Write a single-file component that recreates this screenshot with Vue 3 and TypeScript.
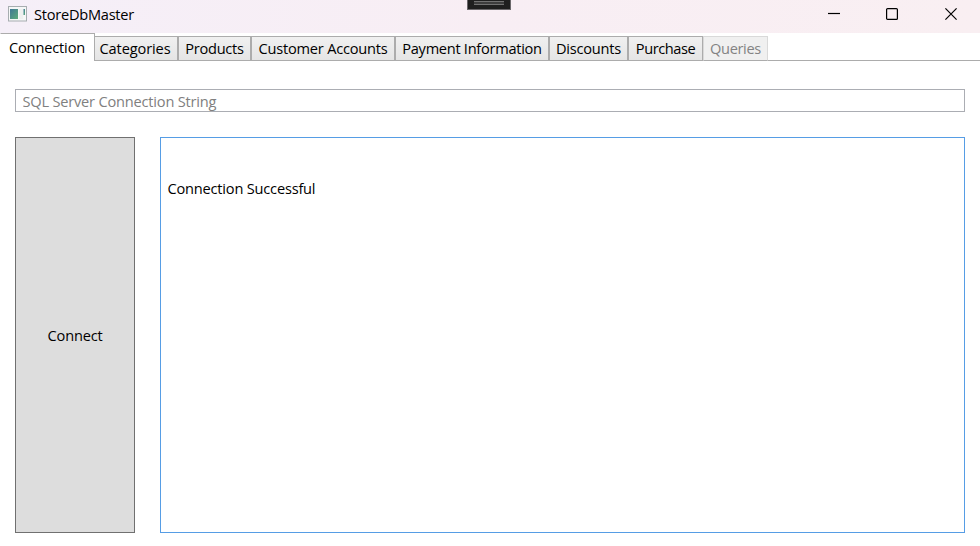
<script setup lang="ts">
import { ref } from 'vue'

interface Tab {
  label: string
  width: number
  spacing: number
  disabled?: boolean
}

const tabs: Tab[] = [
  { label: 'Connection', width: 95, spacing: -0.15 },
  { label: 'Categories', width: 84, spacing: -0.12 },
  { label: 'Products', width: 73, spacing: -0.25 },
  { label: 'Customer Accounts', width: 144, spacing: -0.2 },
  { label: 'Payment Information', width: 154, spacing: -0.28 },
  { label: 'Discounts', width: 79, spacing: -0.22 },
  { label: 'Purchase', width: 75, spacing: -0.45 },
  { label: 'Queries', width: 65, spacing: -0.35, disabled: true },
]
const active = ref('Connection')
const connectionString = ref('')
const message = ref('Connection Successful')
</script>

<template>
  <div class="window">
    <header class="titlebar">
      <svg class="app-icon" width="19" height="16" viewBox="0 0 19 16">
        <defs>
          <linearGradient id="pane" x1="0" y1="0" x2="1" y2="1">
            <stop offset="0" stop-color="#3f7795" />
            <stop offset="1" stop-color="#5dac7b" />
          </linearGradient>
        </defs>
        <rect x="0.5" y="0.5" width="18" height="14.5" fill="#f5f7f7" stroke="#a7adb0" />
        <rect x="2" y="3" width="8" height="10" fill="url(#pane)" />
        <rect x="11" y="3" width="4" height="10" fill="#eef0ef" />
        <rect x="15.5" y="3" width="1.5" height="6" fill="url(#pane)" />
      </svg>
      <span class="title">StoreDbMaster</span>
      <div class="handle"><i></i></div>
      <div class="controls">
        <svg width="12" height="12" viewBox="0 0 12 12"><path d="M0 5.5H12" /></svg>
        <svg width="12" height="12" viewBox="0 0 12 12"><rect x="0.6" y="0.6" width="10.8" height="10.8" rx="1" /></svg>
        <svg width="12" height="12" viewBox="0 0 12 12"><path d="M0.4 0.4L11.6 11.6M11.6 0.4L0.4 11.6" /></svg>
      </div>
    </header>

    <nav class="tabs">
      <button
        v-for="tab in tabs"
        :key="tab.label"
        class="tab"
        :class="{ active: tab.label === active }"
        :disabled="tab.disabled"
        :style="{ width: tab.width + 'px', letterSpacing: tab.spacing + 'px' }"
        @click="active = tab.label"
      >{{ tab.label }}</button>
    </nav>

    <main class="page">
      <input v-model="connectionString" class="conn" placeholder="SQL Server Connection String" />
      <div class="row">
        <button class="connect">Connect</button>
        <div class="output">{{ message }}</div>
      </div>
    </main>
  </div>
</template>

<style>
body {
  background: #fff;
}
</style>

<style scoped>
.window {
  width: 980px;
  height: 546px;
  box-sizing: border-box;
  display: flex;
  flex-direction: column;
  overflow: hidden;
  background: #fff;
  color: #000;
  font: 14.6px/20px 'Open Sans', 'Noto Sans', sans-serif;
  letter-spacing: -0.2px;
}
.window button,
.window input {
  box-sizing: border-box;
  margin: 0;
  font: inherit;
  border-radius: 0;
}
.titlebar {
  position: relative;
  flex: none;
  display: flex;
  align-items: flex-start;
  height: 33px;
  padding-left: 8px;
  background: linear-gradient(90deg, #f5eff8 0%, #f8eef4 50%, #f9eff2 100%);
}
.app-icon {
  margin-top: 6px;
}
.title {
  margin: 4px 0 0 7px;
  letter-spacing: -0.25px;
}
.handle {
  position: absolute;
  left: 467px;
  top: 0;
  width: 44px;
  height: 10px;
  box-sizing: border-box;
  border: 1px solid #6b686b;
  border-top: 0;
  background: #1f1f1f;
}
.handle i {
  display: block;
  width: 30px;
  height: 4px;
  margin: 1px 0 0 6px;
  box-sizing: border-box;
  border: solid #717171;
  border-width: 1px 0;
  background: #3d3d3d;
}
.controls {
  display: flex;
  gap: 46px;
  margin: 8px 23px 0 auto;
}
.controls svg {
  fill: none;
  stroke: #000;
  stroke-width: 1.2;
}
.controls svg:last-child {
  margin-left: 1px;
}
.tabs {
  flex: none;
  display: flex;
  align-items: flex-end;
  height: 28px;
  box-shadow: inset 0 -1px #acacac;
}
.tab {
  height: 25px;
  padding: 0 0 2px;
  border: 1px solid #acacac;
  background: linear-gradient(#f0f0f0, #e5e5e5);
  color: #000;
  text-align: center;
  white-space: nowrap;
}
.tab.active {
  z-index: 1;
  height: 28px;
  margin-right: -1px;
  padding: 0 1px 1px 0;
  border-left-color: #fff;
  border-bottom: 0;
  background: #fff;
}
.tab.active + .tab {
  padding-right: 2px;
}
.tab:disabled {
  border-color: #d9d9d9 #d9d9d9 #acacac;
  background: #f0f0f0;
  color: #838383;
}
.page {
  flex: 1;
  display: flex;
  flex-direction: column;
  gap: 25px;
  padding: 28px 15px 13px;
}
.conn {
  width: 100%;
  height: 23px;
  padding: 0 6.5px;
  border: 1px solid #abadb3;
  outline: 0;
  background: #fff;
  letter-spacing: -0.2px;
}
.conn::placeholder {
  color: #808080;
  opacity: 1;
}
.row {
  flex: 1;
  display: flex;
  gap: 25px;
}
.connect {
  width: 120px;
  padding: 0;
  border: 1px solid #707070;
  background: #ddd;
  color: #000;
  letter-spacing: -0.2px;
}
.output {
  flex: 1;
  padding: 40px 6.5px;
  border: 1px solid #569de5;
}
</style>
